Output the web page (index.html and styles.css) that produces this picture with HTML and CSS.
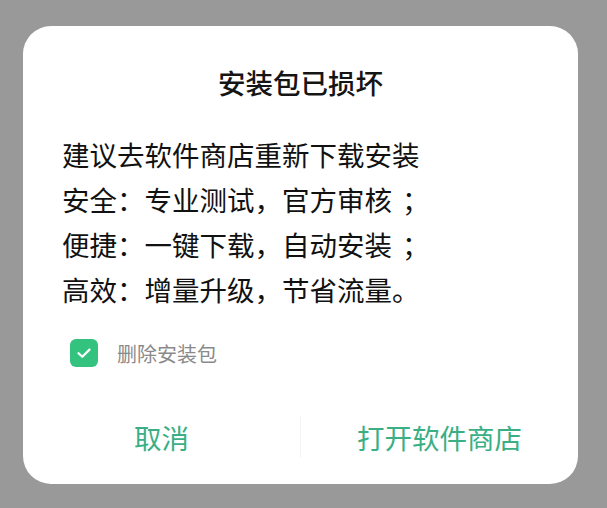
FILE: index.html
```html
<!DOCTYPE html>
<html lang="zh-CN">
<head>
<meta charset="utf-8">
<title>安装包已损坏</title>
<link rel="stylesheet" href="styles.css">
</head>
<body>
<div class="dialog">
  <div class="title">安装包已损坏</div>
  <div class="body">
    <div class="line">建议去软件商店重新下载安装</div>
    <div class="line">安全：专业测试，官方审核<span class="punct">；</span></div>
    <div class="line">便捷：一键下载，自动安装<span class="punct">；</span></div>
    <div class="line">高效：增量升级，节省流量。</div>
  </div>
  <div class="check-row">
    <span class="checkbox">
      <svg width="18" height="18" viewBox="0 0 18 18"><path d="M3.5 9.2 L7.3 12.8 L14.5 5.6" fill="none" stroke="#fff" stroke-width="2.2" stroke-linecap="round" stroke-linejoin="round"/></svg>
    </span>
    <span class="check-label">删除安装包</span>
  </div>
  <div class="buttons">
    <div class="btn">取消</div>
    <div class="divider"></div>
    <div class="btn">打开软件商店</div>
  </div>
</div>
</body>
</html>
```
FILE: styles.css
```css
html, body {
  margin: 0;
  padding: 0;
  background: #999999;
  width: 607px;
  height: 508px;
  overflow: hidden;
  font-family: "Noto Sans CJK SC", "Noto Sans", sans-serif;
}
.dialog {
  margin: 26px 0 0 23px;
  width: 555px;
  height: 458px;
  box-sizing: border-box;
  background: #ffffff;
  border-radius: 28px;
  padding: 38px 0 0 0;
  display: flex;
  flex-direction: column;
}
.title {
  text-align: center;
  font-size: 27.5px;
  line-height: 36px;
  font-weight: 500;
  color: #151515;
}
.body {
  margin-top: 32px;
  padding-left: 39px;
}
.line {
  font-size: 27.5px;
  line-height: 45px;
  font-weight: 400;
  color: #111111;
  white-space: nowrap;
}
.punct {
  padding-left: 10px;
}
.check-row {
  margin-top: 27px;
  padding-left: 47px;
  display: flex;
  align-items: center;
  height: 28px;
}
.checkbox {
  width: 28px;
  height: 28px;
  border-radius: 6px;
  background: #33c37f;
  display: flex;
  align-items: center;
  justify-content: center;
}
.check-label {
  margin-left: 19px;
  font-size: 20px;
  color: #8a8a8a;
}
.buttons {
  margin-top: 40px;
  height: 60px;
  display: flex;
  align-items: center;
}
.btn {
  flex: 1;
  text-align: center;
  font-size: 27.5px;
  color: #3aaf84;
  line-height: 60px;
}
.divider {
  width: 1px;
  height: 42px;
  background: #f3f3f3;
}
```
